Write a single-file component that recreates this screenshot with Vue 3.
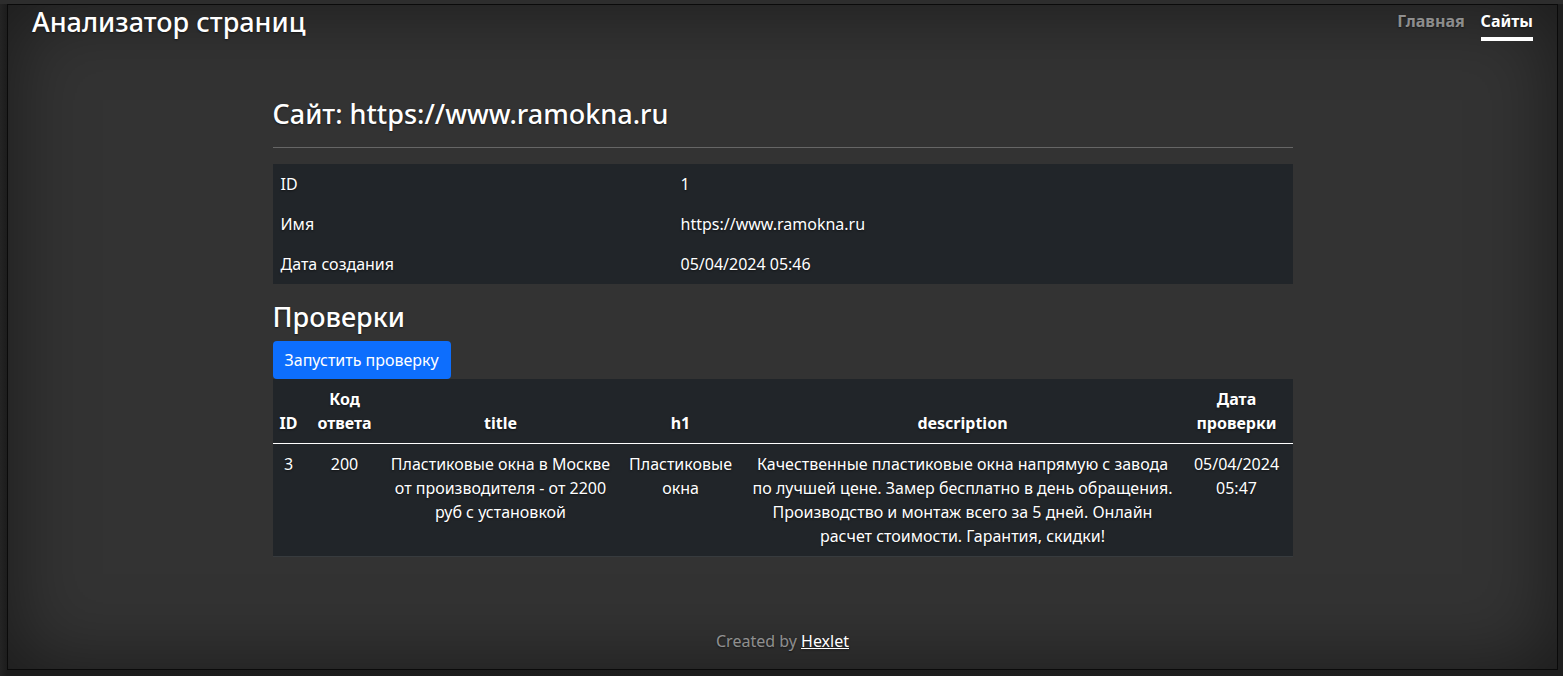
<script setup>
const nav = [
  { label: 'Главная', active: false },
  { label: 'Сайты', active: true },
]

const site = [
  { label: 'ID', value: '1' },
  { label: 'Имя', value: 'https://www.ramokna.ru' },
  { label: 'Дата создания', value: '05/04/2024 05:46' },
]

const columns = [
  { key: 'id', label: 'ID' },
  { key: 'code', label: 'Код ответа' },
  { key: 'title', label: 'title' },
  { key: 'h1', label: 'h1' },
  { key: 'description', label: 'description' },
  { key: 'date', label: 'Дата проверки' },
]

const checks = [
  {
    id: '3',
    code: '200',
    title: 'Пластиковые окна в Москве от производителя - от 2200 руб с установкой',
    h1: 'Пластиковые окна',
    description:
      'Качественные пластиковые окна напрямую с завода по лучшей цене. Замер бесплатно в день обращения. Производство и монтаж всего за 5 дней. Онлайн расчет стоимости. Гарантия, скидки!',
    date: '05/04/2024 05:47',
  },
]
</script>

<template>
  <div class="desk">
    <div class="cover">
      <header class="top">
        <div class="brand">Анализатор страниц</div>
        <nav class="nav">
          <a v-for="n in nav" :key="n.label" href="#" :class="{ active: n.active }">{{ n.label }}</a>
        </nav>
      </header>

      <main class="main">
        <h1>Сайт: https://www.ramokna.ru</h1>
        <hr />
        <table class="info">
          <tbody>
            <tr v-for="row in site" :key="row.label">
              <td class="name">{{ row.label }}</td>
              <td>{{ row.value }}</td>
            </tr>
          </tbody>
        </table>

        <h2>Проверки</h2>
        <form @submit.prevent>
          <button type="submit">Запустить проверку</button>
        </form>
        <table class="checks">
          <colgroup>
            <col v-for="c in columns" :key="c.key" :class="'col-' + c.key" />
          </colgroup>
          <thead>
            <tr>
              <th v-for="c in columns" :key="c.key" scope="col">{{ c.label }}</th>
            </tr>
          </thead>
          <tbody>
            <tr v-for="check in checks" :key="check.id">
              <td v-for="c in columns" :key="c.key">{{ check[c.key] }}</td>
            </tr>
          </tbody>
        </table>
      </main>

      <footer class="foot">Created by <a href="#">Hexlet</a></footer>
    </div>
  </div>
</template>

<style>
body {
  margin: 0;
  background: #202020;
}
</style>

<style scoped>
* {
  box-sizing: border-box;
}

.desk {
  display: flex;
  min-height: 100vh;
  padding: 4px 5px 6px 7px;
  background: linear-gradient(#2d2d2d 4px, transparent 4px), linear-gradient(90deg, #242424, #1c1c1c 7px, #1e1e1e);
  font-family: "Noto Sans", "Open Sans", sans-serif;
  font-size: 16px;
  line-height: 24px;
  color: #fff;
  text-shadow: 0 1px 2px rgba(0, 0, 0, 0.5);
}

.cover {
  flex: 1;
  display: flex;
  flex-direction: column;
  border: 1px solid #0a0a0a;
  background: #333;
  box-shadow: inset 0 0 80px rgba(0, 0, 0, 0.5);
}

.top {
  display: flex;
  justify-content: space-between;
  align-items: flex-start;
  padding: 0 24px;
}

.brand {
  font-size: 27px;
  line-height: 33px;
  font-weight: 500;
}

.nav {
  display: flex;
  gap: 16px;
  padding-top: 4px;
}

.nav a {
  padding-bottom: 4px;
  border-bottom: 4px solid transparent;
  font-weight: 700;
  color: rgba(255, 255, 255, 0.5);
  text-decoration: none;
}

.nav a.active {
  color: #fff;
  border-bottom-color: #fff;
}

.main {
  width: 100%;
  max-width: 1020px;
  margin: 56px auto auto;
}

h1,
h2 {
  margin: 0;
  font-size: 27px;
  line-height: 34px;
  font-weight: 500;
}

h2 {
  line-height: 33px;
  margin-bottom: 8px;
}

hr {
  height: 1px;
  margin: 16px 0;
  border: 0;
  background: #666;
}

table {
  width: 100%;
  table-layout: fixed;
  border-collapse: separate;
  border-spacing: 0;
  background: #212529;
}

td,
th {
  padding: 8px;
}

.info {
  margin-bottom: 16px;
}

.info .name {
  width: 400px;
}

button {
  display: block;
  height: 38px;
  padding: 0 12px;
  border: 0;
  border-radius: 4px;
  background: #0d6efd;
  color: #fff;
  font: inherit;
}

.checks {
  text-align: center;
}

.checks th,
.checks td {
  padding: 8px 6px;
}

.checks th {
  vertical-align: bottom;
  border-bottom: 1px solid #fff;
}

.checks td {
  vertical-align: top;
  border-bottom: 1px solid #373b3e;
}

.col-id {
  width: 32px;
}

.col-code {
  width: 80px;
}

.col-title {
  width: 232px;
}

.col-h1 {
  width: 128px;
}

.col-date {
  width: 112px;
}

.foot {
  padding-bottom: 16px;
  text-align: center;
  color: rgba(255, 255, 255, 0.5);
}

.foot a {
  color: #fff;
}
</style>
